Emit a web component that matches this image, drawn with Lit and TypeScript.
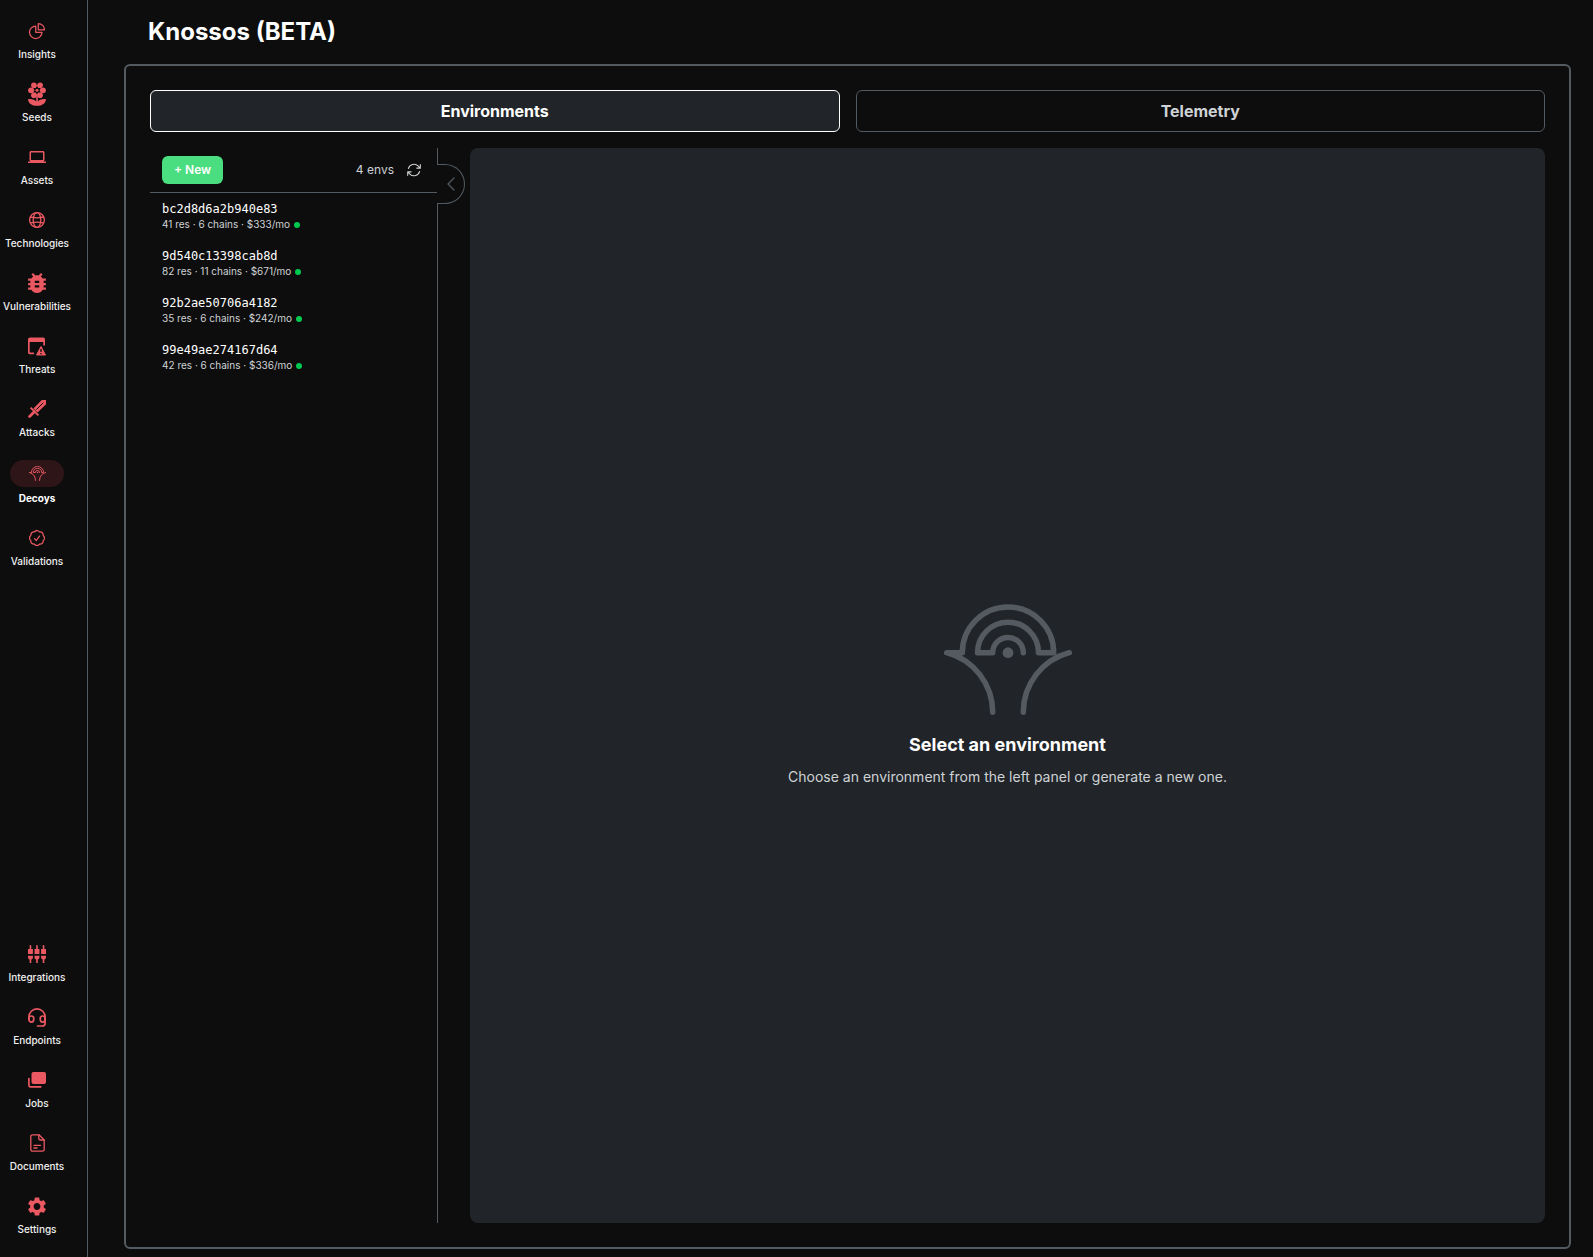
import { LitElement, html, css, svg, nothing } from "lit";
import type { TemplateResult, SVGTemplateResult } from "lit";
import { customElement, property, state } from "lit/decorators.js";
import { classMap } from "lit/directives/class-map.js";

interface NavItem {
  label: string;
  icon: TemplateResult;
}

interface Environment {
  id: string;
  resources: number;
  chains: number;
  cost: number;
}

const icon = (viewBox: string, width: number, height: number, body: SVGTemplateResult) => html`
  <svg viewBox=${viewBox} width=${width} height=${height} fill="none" aria-hidden="true">${body}</svg>
`;

const logoShape = (strokeWidth: number) => svg`
  <g stroke="currentColor" stroke-width=${strokeWidth} stroke-linecap="round" stroke-linejoin="round">
    <path d="M48.7 108.3A61.6 61.6 0 0 0 2.7 48.7H18.3A45.7 45.7 0 0 1 109.7 48.7H94.5A30.5 30.5 0 0 0 33.5 48.7H48.7A15.3 15.3 0 0 1 79.3 48.7"/>
    <path d="M79.3 108.3A61.6 61.6 0 0 1 125.3 48.7"/>
  </g>
  <circle cx="64" cy="48.7" r="5.4" fill="currentColor"/>
`;

const mainNav: NavItem[] = [
  {
    label: "Insights",
    icon: icon("0 0 24 24", 20, 20, svg`
      <path stroke="currentColor" stroke-width="1.5" stroke-linejoin="round" d="M10.5 6a7.5 7.5 0 1 0 7.5 7.5h-7.5V6Z"/>
      <path stroke="currentColor" stroke-width="1.5" stroke-linejoin="round" d="M13.5 10.5H21A7.5 7.5 0 0 0 13.5 3v7.5Z"/>`),
  },
  {
    label: "Seeds",
    icon: icon("0 0 18 24", 18, 24, svg`
      <g fill="currentColor">
        <circle cx="5.9" cy="3.2" r="2.8"/><circle cx="12.1" cy="3.2" r="2.8"/>
        <circle cx="3" cy="8.3" r="2.9"/><circle cx="15" cy="8.3" r="2.9"/>
        <circle cx="5.9" cy="13.2" r="2.8"/><circle cx="12.1" cy="13.2" r="2.8"/>
        <circle cx="9" cy="8.2" r="5"/>
        <path d="M8.2 13h1.6v6.6c1.4-1.9 4-2.8 8.2-2.4-.4 4.2-3.6 6.6-9 6.6s-8.6-2.4-9-6.6c4.2-.4 6.8.5 8.2 2.4Z"/>
      </g>
      <path fill="var(--page)" d="m9 4 1.3 2 2.4-.1L11.6 8.200l1.100 2.300-2.400-.1L9 12.400l-1.300-2-2.400.1 1.100-2.300-1.100-2.300 2.400.1Z"/>
      <circle cx="9" cy="8.2" r="1.5" fill="currentColor"/>`),
  },
  {
    label: "Assets",
    icon: icon("0 0 24 24", 18, 18, svg`
      <path fill="currentColor" d="M20 18c1.1 0 2-.9 2-2V6c0-1.1-.9-2-2-2H4c-1.1 0-2 .9-2 2v10c0 1.1.9 2 2 2H0v2h24v-2h-4ZM4 6h16v10H4V6Z"/>`),
  },
  {
    label: "Technologies",
    icon: icon("0 0 20 20", 20, 20, svg`
      <g stroke="currentColor" stroke-width="1.3">
        <circle cx="10" cy="10" r="7.4"/>
        <ellipse cx="10" cy="10" rx="3.8" ry="7.4"/>
        <path d="M3.3 7c4.2 1 9.2 1 13.4 0M3.300 13c4.2-1 9.2-1 13.4 0"/>
      </g>`),
  },
  {
    label: "Vulnerabilities",
    icon: icon("4 3 16 18", 18, 20, svg`
      <path fill="currentColor" d="M20 8h-2.81c-.45-.78-1.07-1.45-1.82-1.96L17 4.41 15.59 3l-2.17 2.17C12.96 5.06 12.49 5 12 5s-.96.06-1.41.17L8.41 3 7 4.41l1.62 1.63C7.88 6.55 7.26 7.22 6.81 8H4v2h2.09C6.04 10.33 6 10.66 6 11v1H4v2h2v1c0 .34.04.67.09 1H4v2h2.81c1.04 1.79 2.97 3 5.19 3s4.15-1.21 5.19-3H20v-2h-2.09c.05-.33.09-.66.09-1v-1h2v-2h-2v-1c0-.34-.04-.67-.09-1H20V8Zm-6 8h-4v-2h4v2Zm0-4h-4v-2h4v2Z"/>`),
  },
  {
    label: "Threats",
    icon: icon("0 0 18 19", 18, 19, svg`
      <path fill="currentColor" fill-rule="evenodd" d="M2 .5h13A1.9 1.9 0 0 1 17 2.4V8.5h-1.7V5H1.7v10c0 .4.2.6.6.6H6v1.7H2A1.9 1.9 0 0 1 0 15.4V2.4C0 1.3.9.5 2 .5Z"/>
      <path fill="currentColor" stroke="currentColor" stroke-linejoin="round" stroke-width="1" d="M13 9.5 17.5 18h-9L13 9.5Z"/>
      <path stroke="var(--page)" stroke-width="1.3" d="M13 12v3M13 15.9v1.3"/>`),
  },
  {
    label: "Attacks",
    icon: icon("0 0 18 18", 18, 18, svg`
      <path fill="currentColor" d="M18 0v4.2L9.6 12.6 5.4 8.400 13.800 0Z"/>
      <path stroke="var(--page)" stroke-width="1" d="m15.300 2.700-7 7"/>
      <path stroke="currentColor" stroke-width="2" d="m2.600 7.600 7.800 7.800"/>
      <path stroke="currentColor" stroke-width="2.800" stroke-linecap="round" d="m6.300 11.700-4.700 4.700"/>`),
  },
  { label: "Decoys", icon: icon("0 0 128 112", 17, 15, logoShape(7)) },
  {
    label: "Validations",
    icon: icon("0 0 24 24", 20, 20, svg`
      <path stroke="currentColor" stroke-width="1.5" stroke-linecap="round" stroke-linejoin="round" d="M9 12.75 11.25 15 15 9.75M21 12c0 1.268-.63 2.39-1.593 3.068a3.745 3.745 0 0 1-1.043 3.296 3.745 3.745 0 0 1-3.296 1.043A3.745 3.745 0 0 1 12 21c-1.268 0-2.39-.63-3.068-1.593a3.746 3.746 0 0 1-3.296-1.043 3.745 3.745 0 0 1-1.043-3.296A3.745 3.745 0 0 1 3 12c0-1.268.63-2.39 1.593-3.068a3.745 3.745 0 0 1 1.043-3.296 3.746 3.746 0 0 1 3.296-1.043A3.746 3.746 0 0 1 12 3c1.268 0 2.39.63 3.068 1.593a3.746 3.746 0 0 1 3.296 1.043 3.746 3.746 0 0 1 1.043 3.296A3.745 3.745 0 0 1 21 12Z"/>`),
  },
];

const footerNav: NavItem[] = [
  {
    label: "Integrations",
    icon: icon("1 1 22 22", 18, 18, svg`
      <path fill="currentColor" d="M5 2c0-.55-.45-1-1-1s-1 .45-1 1v4H1v6h6V6H5V2Zm4 14c0 1.3.84 2.4 2 2.82V23h2v-4.18c1.16-.41 2-1.51 2-2.82v-2H9v2Zm-8 0c0 1.3.84 2.4 2 2.82V23h2v-4.18C6.16 18.4 7 17.3 7 16v-2H1v2ZM21 6V2c0-.55-.45-1-1-1s-1 .45-1 1v4h-2v6h6V6h-2Zm-8-4c0-.55-.45-1-1-1s-1 .45-1 1v4H9v6h6V6h-2V2Zm4 14c0 1.3.84 2.4 2 2.82V23h2v-4.18c1.16-.41 2-1.51 2-2.82v-2h-6v2Z"/>`),
  },
  {
    label: "Endpoints",
    icon: icon("0 0 18 19", 18, 19, svg`
      <g stroke="currentColor" stroke-width="1.7" stroke-linecap="round">
        <path d="M.9 11.5V9a8.1 8.1 0 0 1 16.2 0v6.2a2.8 2.8 0 0 1-2.8 2.8H9.5"/>
        <path d="M.9 10.8c0-1.8 1-2.8 2.5-2.8S5.8 9 5.8 10.8 4.9 14.2 3.4 14.2.9 13 .9 10.8Z"/>
        <path d="M17.1 10.8c0-1.8-1-2.8-2.5-2.8s-2.4 1-2.4 2.8.9 3.4 2.4 3.4 2.5-1.2 2.5-3.4Z"/>
      </g>`),
  },
  {
    label: "Jobs",
    icon: icon("0 0 18 16", 18, 16, svg`
      <rect x="3.5" y="0" width="14.5" height="12" rx="2" fill="currentColor"/>
      <path stroke="currentColor" stroke-width="1.7" stroke-linecap="round" stroke-linejoin="round" d="M.9 6.5v7c0 .9.4 1.3 1.3 1.3h10.6"/>`),
  },
  {
    label: "Documents",
    icon: icon("0 0 15 18", 15, 18, svg`
      <g stroke="currentColor" stroke-width="1.3" stroke-linecap="round" stroke-linejoin="round">
        <path d="M9 .8H2.5A1.7 1.7 0 0 0 .8 2.5v13a1.7 1.7 0 0 0 1.7 1.7h10a1.7 1.7 0 0 0 1.7-1.7V6L9 .8Z"/>
        <path d="M8.8 1v3.5c0 1 .5 1.5 1.5 1.5h3.7M4 11.3h6.5M4 14h3"/>
      </g>`),
  },
  {
    label: "Settings",
    icon: icon("2.5 2.2 19 19.6", 18, 19, svg`
      <path fill="currentColor" d="M19.14 12.94c.04-.3.06-.61.06-.94 0-.32-.02-.64-.07-.94l2.03-1.58c.18-.14.23-.41.12-.61l-1.92-3.32c-.12-.22-.37-.29-.59-.22l-2.39.96c-.5-.38-1.03-.7-1.62-.94l-.36-2.54c-.04-.24-.24-.41-.48-.41h-3.84c-.24 0-.43.17-.47.41l-.36 2.54c-.59.24-1.13.57-1.62.94l-2.39-.96c-.22-.08-.47 0-.59.22L2.74 8.87c-.12.21-.08.47.12.61l2.03 1.58c-.05.3-.09.63-.09.94s.02.64.07.94l-2.03 1.58c-.18.14-.23.41-.12.61l1.92 3.32c.12.22.37.29.59.22l2.39-.96c.5.38 1.03.7 1.62.94l.36 2.54c.05.24.24.41.48.41h3.84c.24 0 .44-.17.47-.41l.36-2.54c.59-.24 1.13-.56 1.62-.94l2.39.96c.22.08.47 0 .59-.22l1.92-3.32c.12-.22.07-.47-.12-.61l-2.01-1.58ZM12 15.6c-1.98 0-3.6-1.62-3.6-3.6s1.62-3.6 3.6-3.6 3.6 1.62 3.6 3.6-1.62 3.6-3.6 3.6Z"/>`),
  },
];

const environments: Environment[] = [
  { id: "bc2d8d6a2b940e83", resources: 41, chains: 6, cost: 333 },
  { id: "9d540c13398cab8d", resources: 82, chains: 11, cost: 671 },
  { id: "92b2ae50706a4182", resources: 35, chains: 6, cost: 242 },
  { id: "99e49ae274167d64", resources: 42, chains: 6, cost: 336 },
];

@customElement("side-nav")
export class SideNav extends LitElement {
  @property() current = "";

  static styles = css`
    :host {
      display: flex;
      flex-direction: column;
      justify-content: space-between;
      box-sizing: border-box;
      width: 88px;
      padding: 21px 13px 21px 0;
      border-right: 1px solid var(--line);
    }
    nav {
      display: flex;
      flex-direction: column;
      gap: 23px;
    }
    a {
      display: flex;
      flex-direction: column;
      align-items: center;
      gap: 6px;
      color: #f0f0f0;
      font-size: 10px;
      font-weight: 500;
      line-height: 14px;
      text-decoration: none;
    }
    .glyph {
      display: flex;
      align-items: center;
      justify-content: center;
      width: 54px;
      height: 20px;
      color: #ea5962;
    }
    .glyph svg {
      flex: none;
    }
    .active {
      color: #fff;
      font-weight: 700;
    }
    .active .glyph {
      height: 27px;
      margin: -2px 0;
      border-radius: 14px;
      background: #2e1518;
    }
  `;

  private renderItem(item: NavItem) {
    const active = item.label === this.current;
    return html`
      <a class=${classMap({ active })} href="#${item.label.toLowerCase()}" aria-current=${active ? "page" : nothing}>
        <span class="glyph">${item.icon}</span>
        <span>${item.label}</span>
      </a>
    `;
  }

  render() {
    return html`
      <nav aria-label="Main">${mainNav.map((item) => this.renderItem(item))}</nav>
      <nav aria-label="Secondary">${footerNav.map((item) => this.renderItem(item))}</nav>
    `;
  }
}

@customElement("environment-list")
export class EnvironmentList extends LitElement {
  static styles = css`
    :host {
      display: block;
      position: relative;
      box-sizing: border-box;
      width: 288px;
      border-right: 1px solid var(--line);
    }
    button {
      font: inherit;
      color: inherit;
      cursor: pointer;
    }
    header {
      display: flex;
      align-items: center;
      padding: 8px 12px;
      border-bottom: 1px solid var(--line);
      font-size: 12px;
      line-height: 16px;
      color: var(--muted);
    }
    .new {
      padding: 6px 12px;
      border: 0;
      border-radius: 6px;
      background: #4ade80;
      color: #fff;
      font-weight: 600;
    }
    .count {
      margin-left: auto;
    }
    .refresh {
      display: flex;
      margin-left: 9px;
      padding: 4px;
      border: 0;
      background: none;
    }
    ul {
      margin: 0;
      padding: 0;
      list-style: none;
    }
    .env {
      display: block;
      width: 100%;
      padding: 8px 12px;
      border: 0;
      background: none;
      text-align: left;
    }
    .id {
      display: block;
      font: 12px/16px "DejaVu Sans Mono", monospace;
      color: #fff;
    }
    .meta {
      display: flex;
      align-items: center;
      gap: 4px;
      font-size: 10px;
      line-height: 15px;
      color: var(--muted);
    }
    .dot {
      width: 6px;
      height: 6px;
      border-radius: 50%;
      background: #00c950;
    }
    .collapse {
      position: absolute;
      top: 16px;
      right: -28px;
      display: flex;
      align-items: center;
      justify-content: center;
      box-sizing: border-box;
      width: 28px;
      height: 40px;
      padding: 0;
      border: 1px solid var(--line);
      border-left: 0;
      border-radius: 0 20px 20px 0;
      background: var(--page);
      color: var(--line);
    }
  `;

  render() {
    return html`
      <header>
        <button class="new">+ New</button>
        <span class="count">${environments.length} envs</span>
        <button class="refresh" aria-label="Refresh">
          ${icon("2 2 20 20", 14, 14, svg`
            <path stroke="currentColor" stroke-width="1.5" stroke-linecap="round" stroke-linejoin="round" d="M16.023 9.348h4.992M2.985 19.644v-4.992m0 0h4.992m-4.993 0 3.181 3.183a8.25 8.25 0 0 0 13.803-3.7M4.031 9.865a8.25 8.25 0 0 1 13.803-3.7l3.181 3.182m0-4.991v4.99"/>`)}
        </button>
      </header>
      <ul>
        ${environments.map(
          (env) => html`
            <li>
              <button class="env">
                <span class="id">${env.id}</span>
                <span class="meta">
                  <span>${env.resources} res · ${env.chains} chains · $${env.cost}/mo</span>
                  <span class="dot"></span>
                </span>
              </button>
            </li>
          `,
        )}
      </ul>
      <button class="collapse" aria-label="Collapse panel">
        ${icon("0 0 8 14", 8, 14, svg`
          <path stroke="currentColor" stroke-width="1.3" stroke-linecap="round" stroke-linejoin="round" d="M7 1 1 7l6 6"/>`)}
      </button>
    `;
  }
}

@customElement("app-root")
export class AppRoot extends LitElement {
  @state() private tab = "Environments";

  static styles = css`
    :host {
      --page: #0d0d0d;
      --panel: #212529;
      --line: #535a60;
      --muted: #cfd2d5;
      display: flex;
      min-height: 100vh;
      background: var(--page);
      color: #fff;
      font-family: Inter, "Liberation Sans", sans-serif;
    }
    main {
      display: flex;
      flex: 1;
      flex-direction: column;
      min-width: 0;
      padding: 16px 22px 8px 36px;
    }
    h1 {
      margin: 0 0 16px 24px;
      font-size: 24px;
      line-height: 32px;
      font-weight: 700;
    }
    .card {
      display: flex;
      flex: 1;
      flex-direction: column;
      gap: 16px;
      padding: 24px;
      border: 2px solid var(--line);
      border-radius: 6px;
    }
    .tabs {
      display: grid;
      grid-template-columns: 1fr 1fr;
      gap: 16px;
    }
    .tab {
      padding: 8px;
      border: 1px solid var(--line);
      border-radius: 6px;
      background: none;
      color: #cfd2d5;
      font: 700 16px/24px Inter, "Liberation Sans", sans-serif;
      cursor: pointer;
    }
    .selected {
      border-color: #fff;
      background: var(--panel);
      color: #fff;
    }
    .workspace {
      display: flex;
      flex: 1;
      gap: 32px;
    }
    .empty {
      display: flex;
      flex: 1;
      flex-direction: column;
      align-items: center;
      justify-content: center;
      border-radius: 8px;
      background: var(--panel);
      text-align: center;
    }
    .mark {
      display: flex;
      padding: 19px 0 15px;
      color: #545a5f;
    }
    h2 {
      margin: 0 0 8px;
      font-size: 18px;
      line-height: 28px;
      font-weight: 700;
    }
    p {
      margin: 0;
      font-size: 14px;
      line-height: 20px;
      color: var(--muted);
    }
  `;

  render() {
    return html`
      <side-nav current="Decoys"></side-nav>
      <main>
        <h1>Knossos (BETA)</h1>
        <section class="card">
          <div class="tabs" role="tablist">
            ${["Environments", "Telemetry"].map(
              (name) => html`
                <button
                  role="tab"
                  class=${classMap({ tab: true, selected: name === this.tab })}
                  aria-selected=${name === this.tab ? "true" : "false"}
                  @click=${() => (this.tab = name)}
                >${name}</button>
              `,
            )}
          </div>
          <div class="workspace">
            <environment-list></environment-list>
            <section class="empty">
              <div class="mark">${icon("0 0 128 112", 128, 112, logoShape(5.5))}</div>
              <h2>Select an environment</h2>
              <p>Choose an environment from the left panel or generate a new one.</p>
            </section>
          </div>
        </section>
      </main>
    `;
  }
}
